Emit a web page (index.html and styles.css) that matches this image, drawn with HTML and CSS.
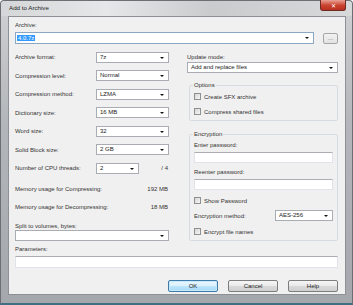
FILE: index.html
```html
<!DOCTYPE html>
<html lang="en">
<head>
    <meta charset="UTF-8">
    <title>Add to Archive</title>
    <link rel="stylesheet" href="styles.css">
</head>
<body>
    <div class="window">
        <div class="titlebar">
            <span class="title">Add to Archive</span>
            <span class="close">&#x2715;</span>
        </div>
        <div class="client">
            <div class="label top-label">Archive:</div>
            <div class="archive-row">
                <div class="combo archive-combo"><span class="sel">4.0.7z</span><span class="arrow"></span></div>
                <div class="btn browse">...</div>
            </div>

            <div class="columns">
                <div class="left">
                    <div class="row"><span class="label">Archive format:</span><div class="combo w73">7z<span class="arrow"></span></div></div>
                    <div class="row"><span class="label">Compression level:</span><div class="combo w73">Normal<span class="arrow"></span></div></div>
                    <div class="row"><span class="label">Compression method:</span><div class="combo w73">LZMA<span class="arrow"></span></div></div>
                    <div class="row"><span class="label">Dictionary size:</span><div class="combo w73">16 MB<span class="arrow"></span></div></div>
                    <div class="row"><span class="label">Word size:</span><div class="combo w73">32<span class="arrow"></span></div></div>
                    <div class="row"><span class="label">Solid Block size:</span><div class="combo w73">2 GB<span class="arrow"></span></div></div>
                    <div class="row"><span class="label">Number of CPU threads:</span><div class="combo w43">2<span class="arrow"></span></div><span class="value">/ 4</span></div>
                    <div class="row mem first"><span class="label">Memory usage for Compressing:</span><span class="value">192 MB</span></div>
                    <div class="row mem"><span class="label">Memory usage for Decompressing:</span><span class="value">18 MB</span></div>
                    <div class="label split-label">Split to volumes, bytes:</div>
                    <div class="combo full"><span class="arrow"></span></div>
                </div>

                <div class="right">
                    <div class="label update-label">Update mode:</div>
                    <div class="combo full">Add and replace files<span class="arrow"></span></div>

                    <fieldset class="group options">
                        <legend>Options</legend>
                        <div class="check tall"><span class="box"></span>Create SFX archive</div>
                        <div class="check tall"><span class="box"></span>Compress shared files</div>
                    </fieldset>

                    <fieldset class="group encryption">
                        <legend>Encryption</legend>
                        <div class="label pw-label">Enter password:</div>
                        <div class="input"></div>
                        <div class="label pw-label second">Reenter password:</div>
                        <div class="input"></div>
                        <div class="check show-pw"><span class="box"></span>Show Password</div>
                        <div class="method-row"><span class="label">Encryption method:</span><div class="combo w58">AES-256<span class="arrow"></span></div></div>
                        <div class="check names"><span class="box"></span>Encrypt file names</div>
                    </fieldset>
                </div>
            </div>

            <div class="label params-label">Parameters:</div>
            <div class="input params"></div>

            <div class="buttons">
                <div class="btn default">OK</div>
                <div class="btn">Cancel</div>
                <div class="btn">Help</div>
            </div>
        </div>
    </div>
</body>
</html>
```

FILE: styles.css
```css
body { margin: 0; font-family: "Liberation Sans", Arial, sans-serif; font-size: 6px; color: #2a2a2a; background: #fff; }
.window { width: 353px; height: 305px; box-sizing: border-box; padding: 0 6px 8px 7px; background: linear-gradient(#cfd1d3, #b3b6ba 40%, #a4a8ac); border: 1px solid #6c7075; border-bottom: 2px solid #3f6f80; border-radius: 4px 4px 0 0; display: flex; flex-direction: column; }
.titlebar { height: 15px; position: relative; display: flex; align-items: center; background: linear-gradient(90deg, #d4d6d8, #e6e7e8 30%, #c9cbcd 60%, #d8d9da); margin: 0 -6px 0 -7px; padding-left: 8px; border-radius: 4px 4px 0 0; }
.title { font-size: 6.2px; color: #1e1e1e; margin-top: -2px; }
.close { position: absolute; right: 6px; top: -1px; width: 24px; height: 10px; background: linear-gradient(#e9a295, #c9412f 55%, #b8311f); border: 1px solid #6f2a22; border-top: none; border-radius: 0 0 3px 3px; color: #fff; font-size: 6px; display: flex; align-items: center; justify-content: center; }
.client { flex: 1; background: #f0f0f0; border: 1px solid #8d9196; padding: 0 7px 0 6px; display: flex; flex-direction: column; }
.label { line-height: 8px; white-space: nowrap; color: #333; }
.top-label { margin-top: 4px; }
.archive-row { display: flex; align-items: center; margin-top: 3px; gap: 9px; }
.combo { position: relative; height: 11px; box-sizing: border-box; border: 1px solid #a9acb2; background: #fff; padding-left: 3px; line-height: 9px; white-space: nowrap; color: #222; }
.combo.full { width: 100%; }
.archive-combo { flex: 1; height: 12px; line-height: 10px; padding-left: 1px; border-color: #8aa7c4; }
.sel { background: #3399ff; color: #fff; padding: 0 1px; }
.arrow { position: absolute; right: 4px; top: 4px; border-left: 2px solid transparent; border-right: 2px solid transparent; border-top: 2px solid #111; }
.btn { width: 50px; height: 12px; box-sizing: border-box; border: 1px solid #7d7d7d; border-radius: 2px; background: linear-gradient(#f6f6f6, #e9e9e9 50%, #d9d9d9 51%, #cfcfcf); display: flex; align-items: center; justify-content: center; color: #222; }
.browse { width: 15px; height: 11px; color: #666; border-color: #a5a5a5; background: linear-gradient(#f2f2f2, #e2e2e2); }
.btn.default { border-color: #3d7bad; background: linear-gradient(#eaf6fd, #d9f0fc 50%, #bee6fd 51%, #a7d9f5); box-shadow: inset 0 0 0 1px #c8e8fb; }
.columns { display: flex; gap: 18px; margin-top: 4px; }
.left { width: 154px; display: flex; flex-direction: column; }
.right { width: 152px; display: flex; flex-direction: column; }
.row { height: 18.5px; display: flex; align-items: center; }
.row .label { width: 81px; }
.row.mem { height: 18px; }
.w73 { width: 73px; }
.w43 { width: 43px; }
.w58 { width: 58px; }
.value { margin-left: auto; margin-right: 1px; color: #333; }
.mem.first { margin-top: 2px; }
.split-label { margin-top: 6px; }
.update-label { margin-top: 5px; margin-bottom: 1px; }
.group { margin: 0 0 0 2px; padding: 0 4px; border: 1px solid #d5dbe0; border-radius: 2px; }
.group legend { padding: 0 1px; margin-left: -1px; line-height: 8px; color: #333; }
.options { margin-top: 8px; padding-bottom: 1px; }
.encryption { margin-top: 9px; padding-bottom: 3px; }
.check { display: flex; align-items: center; height: 11px; color: #333; }
.check.tall { height: 15px; }
.box { width: 7px; height: 7px; box-sizing: border-box; border: 1px solid #8f8f8f; background: linear-gradient(135deg, #d6d6d6, #f6f6f6); margin-right: 3px; }
.pw-label { margin-top: 3px; }
.pw-label.second { margin-top: 5px; }
.input { height: 11px; box-sizing: border-box; border: 1px solid #e2e3ea; border-top-color: #abadb3; background: #fff; margin-top: 3px; }
.show-pw { margin-top: 5px; }
.method-row { display: flex; align-items: center; justify-content: space-between; margin-top: 4px; }
.names { margin-top: 5px; }
.params-label { margin-top: 4px; }
.input.params { height: 12px; }
.buttons { display: flex; justify-content: flex-end; gap: 10px; margin-top: 12px; }
```
